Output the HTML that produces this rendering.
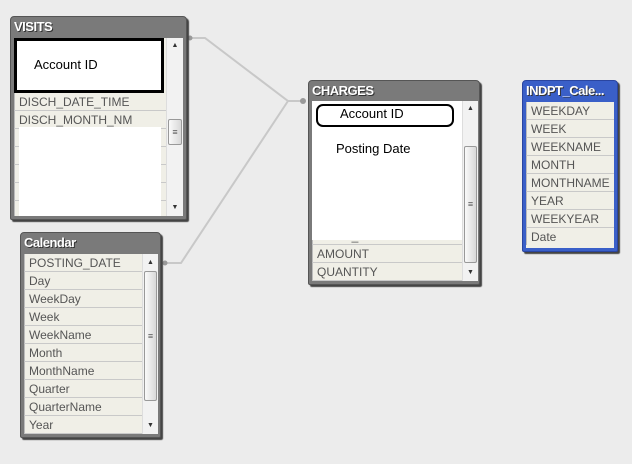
<!DOCTYPE html>
<html><head><meta charset="utf-8"><style>
body{margin:0;width:632px;height:464px;background:#ececec;position:relative;overflow:hidden;font-family:"Liberation Sans",sans-serif}
.box{position:absolute;background:#7a7a7a;border:1px solid #555;border-radius:4px 4px 2px 2px;box-shadow:2px 2px 1px #444}
.title{position:absolute;left:3px;top:2px;color:#fff;font-weight:bold;font-size:13px;letter-spacing:-0.5px;text-shadow:1px 1px 0 #333}
.list{position:absolute;background:#f0efe7;overflow:hidden}
.row{height:17px;border-bottom:1px solid #c9c9c9;font-size:12px;color:#555;line-height:19px;padding-left:4px;white-space:nowrap;border-left:1px solid #bbb}
.sb{position:absolute;background:#f2f2f2;border-left:1px solid #ddd}
.thumb{position:absolute;left:1px;right:1px;background:linear-gradient(90deg,#fafafa,#d8d8d8);border:1px solid #999;border-radius:2px}
.arr{position:absolute;left:0;right:0;text-align:center;font-size:7px;color:#333}
.w{position:absolute;background:#fff}
</style></head><body>
<svg width="632" height="464" style="position:absolute;left:0;top:0">
<polyline points="190,38 205,38 288,101 303,101" fill="none" stroke="#c8c8c8" stroke-width="2"/>
<polyline points="165,263 181,263 288,101" fill="none" stroke="#c8c8c8" stroke-width="2"/>
<circle cx="190" cy="38" r="2.5" fill="#999"/><circle cx="303" cy="101" r="3" fill="#999"/><circle cx="165" cy="263" r="2.5" fill="#999"/>
</svg>

<!-- VISITS -->
<div class="box" style="left:10px;top:16px;width:175px;height:202px">
<div class="title">VISITS</div>
<div class="list" style="left:3px;top:21px;width:152px;height:178px">
<div style="position:absolute;left:0;top:0;width:144px;height:49px;border:3px solid #000;background:#fff"></div>
<div style="position:absolute;left:20px;top:19px;font-size:13px;color:#000">Account ID</div>
<div style="position:absolute;left:0;top:55px;width:152px">
<div class="row">DISCH_DATE_TIME</div><div class="row">DISCH_MONTH_NM</div>
<div class="row"></div><div class="row"></div><div class="row"></div><div class="row"></div><div class="row"></div></div>
<div class="w" style="left:5px;top:89px;width:142px;height:90px"></div>
</div>
<div class="sb" style="left:155px;top:21px;width:16px;height:178px">
<div class="arr" style="top:4px">▲</div>
<div class="thumb" style="top:81px;height:24px"><div style="text-align:center;font-size:9px;line-height:24px;color:#555">≡</div></div>
<div class="arr" style="top:166px">▼</div></div>
</div>

<!-- CHARGES -->
<div class="box" style="left:308px;top:80px;width:170px;height:203px">
<div class="title">CHARGES</div>
<div class="list" style="left:3px;top:20px;width:150px;height:180px">
<div style="position:absolute;left:0;top:126px;width:150px"><div class="row">PROC_NAME</div><div class="row">AMOUNT</div><div class="row">QUANTITY</div></div>
<div class="w" style="left:0;top:0;width:150px;height:139px"></div>
<div style="position:absolute;left:4px;top:3px;width:134px;height:19px;border:2px solid #000;border-radius:7px"></div>
<div style="position:absolute;left:28px;top:5px;font-size:13px;color:#000">Account ID</div>
<div style="position:absolute;left:24px;top:40px;font-size:13px;color:#000">Posting Date</div>
</div>
<div class="sb" style="left:153px;top:20px;width:15px;height:180px">
<div class="arr" style="top:4px">▲</div>
<div class="thumb" style="top:45px;height:115px"><div style="text-align:center;font-size:9px;line-height:115px;color:#555">≡</div></div>
<div class="arr" style="top:168px">▼</div></div>
</div>

<!-- Calendar -->
<div class="box" style="left:20px;top:232px;width:139px;height:204px">
<div class="title">Calendar</div>
<div class="list" style="left:3px;top:21px;width:118px;height:180px">
<div class="row">POSTING_DATE</div><div class="row">Day</div><div class="row">WeekDay</div><div class="row">Week</div><div class="row">WeekName</div><div class="row">Month</div><div class="row">MonthName</div><div class="row">Quarter</div><div class="row">QuarterName</div><div class="row">Year</div>
</div>
<div class="sb" style="left:121px;top:21px;width:15px;height:180px">
<div class="arr" style="top:5px">▲</div>
<div class="thumb" style="top:17px;height:128px"><div style="text-align:center;font-size:9px;line-height:128px;color:#555">≡</div></div>
<div class="arr" style="top:168px">▼</div></div>
</div>

<!-- INDPT -->
<div class="box" style="left:522px;top:80px;width:94px;height:170px;background:#3a5fc8;border-color:#2a45a0">
<div class="title">INDPT_Cale...</div>
<div class="list" style="left:3px;top:21px;width:88px;height:146px">
<div class="row">WEEKDAY</div><div class="row">WEEK</div><div class="row">WEEKNAME</div><div class="row">MONTH</div><div class="row">MONTHNAME</div><div class="row">YEAR</div><div class="row">WEEKYEAR</div><div class="row" style="border-bottom:none">Date</div>
</div>
</div>
</body></html>
